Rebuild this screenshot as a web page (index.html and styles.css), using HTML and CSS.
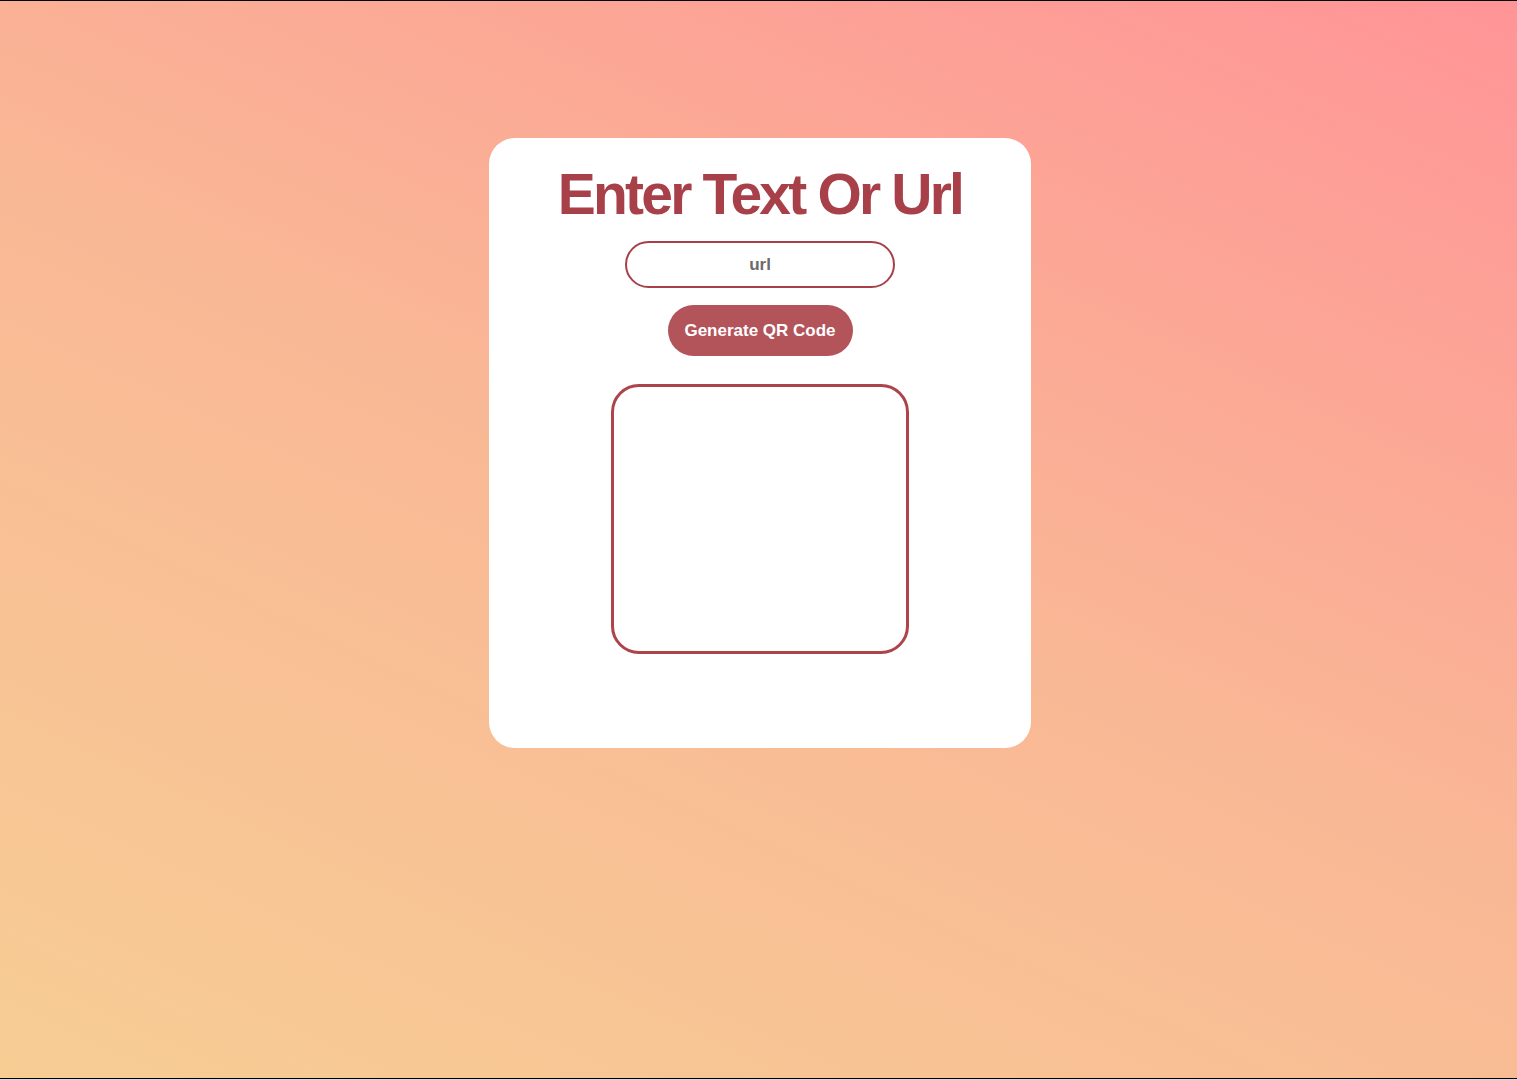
FILE: index.html
```html
<!DOCTYPE html>
<html lang="en">
<head>
<meta charset="utf-8">
<title>QR Code Generator</title>
<link rel="stylesheet" href="styles.css">
</head>
<body>
<main class="page">
  <section class="card">
    <h1 class="title">Enter Text Or Url</h1>
    <input class="field" type="text" placeholder="url">
    <button class="btn" type="button">Generate QR Code</button>
    <div class="qr-box"></div>
  </section>
</main>
</body>
</html>
```
FILE: styles.css
```css
html {
  margin: 0;
  background: #d8d8e6;
}
body {
  margin: 0;
  font-family: "Liberation Sans", Arial, sans-serif;
}
.page {
  box-sizing: border-box;
  height: 1079px;
  border-top: 1px solid #000;
  border-bottom: 1px solid #000;
  background: linear-gradient(25deg, #f7cd94 0%, #f9b895 50%, #ff9497 100%);
  display: flex;
  justify-content: center;
  align-items: flex-start;
  padding-top: 137px;
  padding-left: 3px;
}
.card {
  width: 542px;
  height: 610px;
  box-sizing: border-box;
  background: #fff;
  border-radius: 26px;
  display: flex;
  flex-direction: column;
  align-items: center;
  padding-top: 25px;
}
.title {
  margin: 0;
  font-size: 57px;
  font-weight: 700;
  letter-spacing: -2.8px;
  line-height: 62px;
  color: #a8404a;
}
.field {
  margin-top: 16px;
  width: 270px;
  height: 47px;
  box-sizing: border-box;
  border: 2px solid #a8404a;
  border-radius: 24px;
  outline: none;
  text-align: center;
  font-family: "Liberation Sans", Arial, sans-serif;
  font-size: 17px;
  font-weight: 700;
  color: #555;
  padding: 0 12px;
}
.field::placeholder {
  color: #6b6b6b;
}
.btn {
  margin-top: 17px;
  width: 185px;
  height: 51px;
  border: none;
  border-radius: 26px;
  background: #b3535a;
  color: #fff;
  font-family: "Liberation Sans", Arial, sans-serif;
  font-size: 17px;
  font-weight: 700;
  cursor: pointer;
}
.qr-box {
  margin-top: 28px;
  width: 298px;
  height: 270px;
  box-sizing: border-box;
  border: 3.5px solid #ad444c;
  border-radius: 28px;
}
```
